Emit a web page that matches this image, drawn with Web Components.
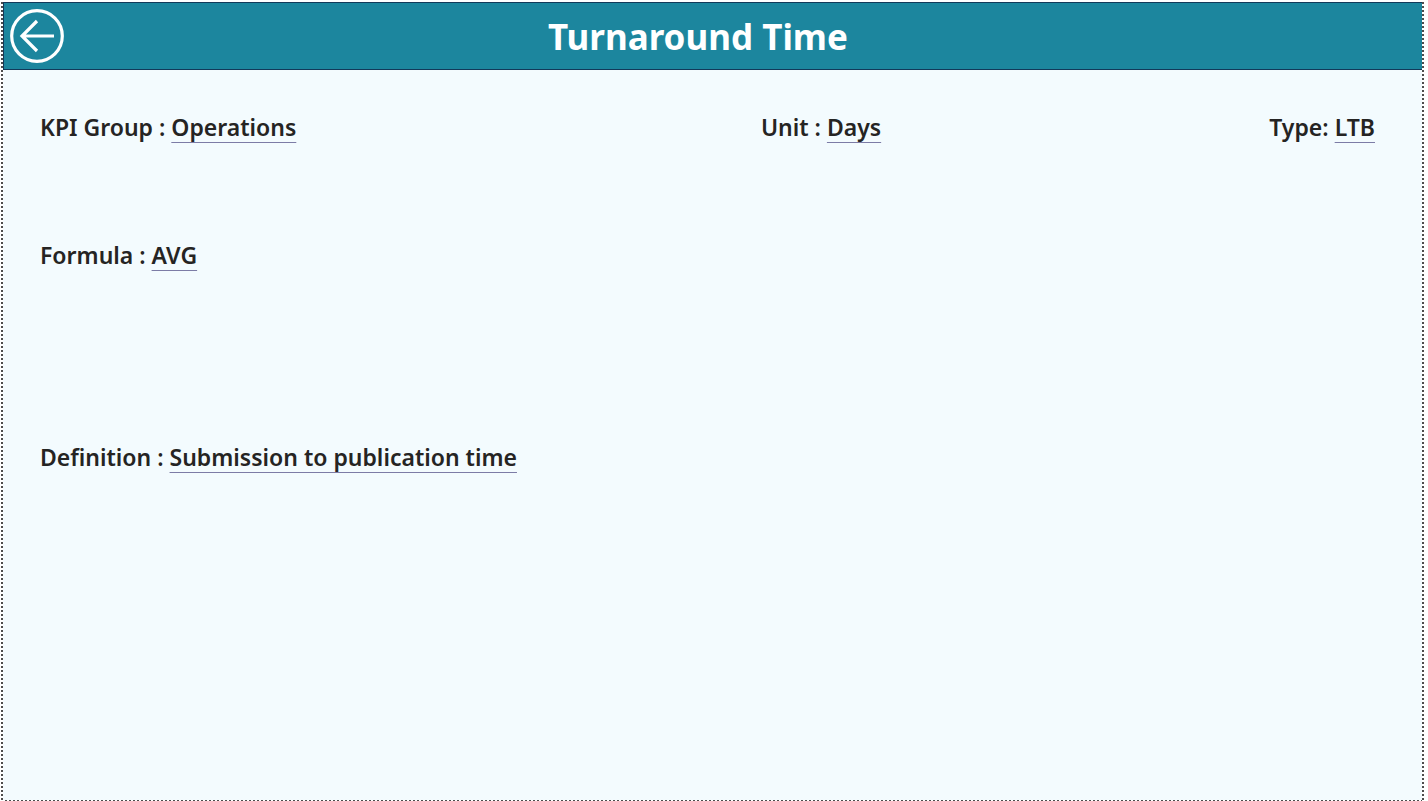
<!DOCTYPE html>
<html lang="en">
<head>
<meta charset="utf-8">
<title>Turnaround Time</title>
<style>
html,body{margin:0;background:#fff}
body{font-family:"Segoe UI","Noto Sans","Open Sans",sans-serif;color:#252423}
</style>
</head>
<body>
<kpi-page></kpi-page>
<script>
const define = (name, html) => customElements.define(name, class extends HTMLElement {
  constructor() {
    super();
    this.attachShadow({ mode: 'open' }).innerHTML = html;
  }
});

define('kpi-header', `
<style>
:host{display:grid;grid-template-columns:66px 1fr 96px;align-items:center;height:68px;box-sizing:border-box;background:#1c869e;border:solid #12395a;border-width:1px 0 1px 1px;color:#fff}
button{width:54px;height:54px;margin:0 0 0 6px;padding:0;border:0;background:none;color:inherit;cursor:pointer}
svg{display:block}
h1{margin:0;padding-top:2px;text-align:center;font-size:35px;line-height:48px;font-weight:700}
</style>
<button type="button" aria-label="Back">
<svg width="54" height="54" viewBox="0 0 54 54" fill="none" stroke="currentColor" stroke-width="3.2"><circle cx="27" cy="27" r="25.3"/><path d="M44 27H12M27 12L12 27L27 42"/></svg>
</button>
<h1><slot></slot></h1>`);

define('kpi-field', `
<style>
:host{display:block;font-size:23px;line-height:30px;font-weight:600;white-space:nowrap}
.value{text-decoration:underline 1px #7c7ca6;text-underline-offset:6px;text-decoration-skip-ink:none}
</style>
<slot name="label"></slot> <span class="value"><slot></slot></span>`);

define('kpi-page', `
<style>
:host{display:block;box-sizing:border-box;min-height:calc(100vh - 2px);margin:2px 4px 0 1px;padding:0 2px;
background:
repeating-linear-gradient(#4d4d4d 0 2px,#fff 2px 4px) left/2px 100% no-repeat,
repeating-linear-gradient(#4d4d4d 0 2px,#fff 2px 4px) right/2px 100% no-repeat,
repeating-linear-gradient(90deg,#4d4d4d 0 2px,#fff 2px 4px) bottom/100% 1px no-repeat,
#f3fbfe}
main{display:grid;row-gap:98px;padding:42px 47px 0 37px}
.summary{display:grid;grid-template-columns:54% 1fr auto}
.definition{margin-top:74px}
</style>
<kpi-header>Turnaround Time</kpi-header>
<main>
<div class="summary">
<kpi-field><span slot="label">KPI Group :</span>Operations</kpi-field>
<kpi-field><span slot="label">Unit :</span>Days</kpi-field>
<kpi-field><span slot="label">Type:</span>LTB</kpi-field>
</div>
<kpi-field><span slot="label">Formula :</span>AVG</kpi-field>
<kpi-field class="definition"><span slot="label">Definition :</span>Submission to publication time</kpi-field>
</main>`);
</script>
</body>
</html>
